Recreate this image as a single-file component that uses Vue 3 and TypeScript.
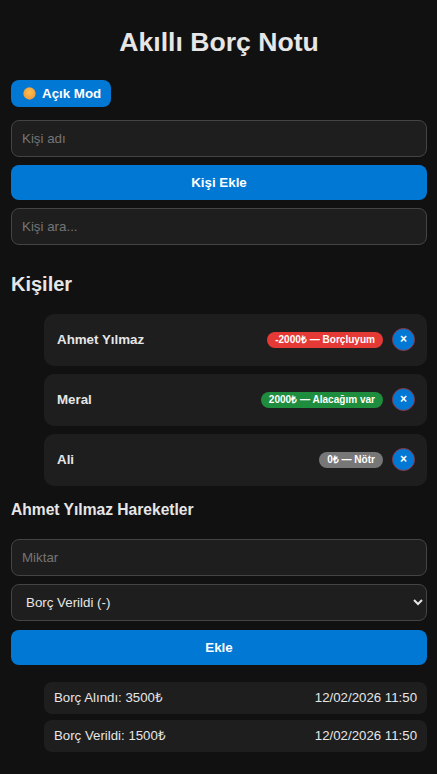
<script setup lang="ts">
import { ref } from "vue";

interface Person { name: string; label: string; tone: string }
interface Move { text: string; date: string }

const name = ref("");
const search = ref("");
const amount = ref("");
const kind = ref("verildi");

const people: Person[] = [
  { name: "Ahmet Yılmaz", label: "-2000₺ — Borçluyum", tone: "red" },
  { name: "Meral", label: "2000₺ — Alacağım var", tone: "green" },
  { name: "Ali", label: "0₺ — Nötr", tone: "gray" },
];
const moves: Move[] = [
  { text: "Borç Alındı: 3500₺", date: "12/02/2026 11:50" },
  { text: "Borç Verildi: 1500₺", date: "12/02/2026 11:50" },
];
</script>

<template>
  <main class="page">
    <h1 class="title">Akıllı Borç Notu</h1>
    <button class="mode" type="button">
      <svg class="sun" viewBox="0 0 14 14" width="13" height="13" aria-hidden="true">
        <defs>
          <radialGradient id="sunFill" cx="50%" cy="40%" r="60%">
            <stop offset="0%" stop-color="#fbc04e" />
            <stop offset="100%" stop-color="#ee9a3c" />
          </radialGradient>
        </defs>
        <circle cx="7" cy="7" r="6.6" fill="url(#sunFill)" />
      </svg>
      <span>Açık Mod</span>
    </button>

    <input v-model="name" class="field" placeholder="Kişi adı" />
    <button class="primary" type="button">Kişi Ekle</button>
    <input v-model="search" class="field" placeholder="Kişi ara..." />

    <h2 class="section">Kişiler</h2>
    <ul class="people">
      <li v-for="p in people" :key="p.name" class="person">
        <strong class="person-name">{{ p.name }}</strong>
        <div class="person-end">
          <span class="badge" :class="p.tone">{{ p.label }}</span>
          <button class="remove" type="button" aria-label="Sil">×</button>
        </div>
      </li>
    </ul>

    <h3 class="sub">Ahmet Yılmaz Hareketler</h3>
    <input v-model="amount" class="field amount" placeholder="Miktar" />
    <select v-model="kind" class="field select">
      <option value="verildi">Borç Verildi (-)</option>
      <option value="alindi">Borç Alındı (+)</option>
    </select>
    <button class="primary" type="button">Ekle</button>

    <ul class="moves">
      <li v-for="m in moves" :key="m.text" class="move">
        <span>{{ m.text }}</span>
        <span>{{ m.date }}</span>
      </li>
    </ul>
  </main>
</template>

<style>
html, body { margin: 0; background: #111; }
</style>

<style scoped>
.page {
  box-sizing: border-box;
  min-height: 774px;
  padding: 24px 10px 0 11px;
  background: #111;
  color: #e6e6e6;
  font-family: "Liberation Sans", Arial, sans-serif;
  display: flex;
  flex-direction: column;
  align-items: stretch;
}
.title {
  margin: 0 0 19px;
  font-size: 26.6px;
  line-height: 37px;
  font-weight: 700;
  text-align: center;
  color: #e6e6e6;
}
.mode {
  align-self: flex-start;
  display: flex;
  align-items: center;
  gap: 6px;
  width: 100px;
  height: 27px;
  padding: 0 0 0 12px;
  border: 0;
  border-radius: 8px;
  background: #0078d4;
  color: #fff;
  font: 700 13.333px "Liberation Sans", Arial, sans-serif;
  margin-bottom: 13px;
}
.sun { flex: none; }
.field {
  box-sizing: border-box;
  display: block;
  width: 100%;
  height: 37px;
  padding: 0 10px;
  border: 1px solid #444;
  border-radius: 8px;
  background: #1e1e1e;
  color: #e6e6e6;
  font: 400 13.333px "Liberation Sans", Arial, sans-serif;
  outline: none;
}
.field::placeholder { color: #757575; }
.primary {
  display: block;
  width: 100%;
  height: 35px;
  margin: 8px 0;
  border: 0;
  border-radius: 8px;
  background: #0078d4;
  color: #fff;
  font: 700 13.333px "Liberation Sans", Arial, sans-serif;
}
.section {
  margin: 27px 0 18px;
  font-size: 20px;
  line-height: 24px;
  font-weight: 700;
}
.people, .moves {
  list-style: none;
  margin: 0;
  padding: 0 0 0 33px;
  display: flex;
  flex-direction: column;
}
.people { gap: 8px; }
.person {
  height: 52px;
  padding: 0 12px 0 13px;
  border-radius: 10px;
  background: #1e1e1e;
  display: flex;
  align-items: center;
  justify-content: space-between;
}
.person-name { font-size: 13.333px; font-weight: 700; margin-bottom: 2px; }
.person-end { display: flex; align-items: center; gap: 9px; }
.badge {
  height: 16px;
  padding: 0 8px;
  border-radius: 8px;
  color: #fff;
  font-size: 10.05px;
  line-height: 16px;
  font-weight: 700;
}
.red { background: #e53935; }
.green { background: #1e8e3e; }
.gray { background: #777; }
.remove {
  box-sizing: border-box;
  width: 23px;
  height: 23px;
  margin-bottom: 1px;
  padding: 0 0 1px;
  border: 1px solid #8a3a4a;
  border-radius: 50%;
  background: #0078d4;
  color: #fff;
  font: 700 12px "Liberation Sans", Arial, sans-serif;
}
.sub {
  margin: 15px 0 20px;
  font-size: 15.6px;
  line-height: 18px;
  font-weight: 700;
}
.select { margin-top: 8px; }
.select option { background: #1e1e1e; }
.select + .primary { margin-top: 9px; }
.moves { margin-top: 9px; gap: 6px; }
.move {
  box-sizing: border-box;
  height: 32px;
  padding: 0 10px 2px;
  border-radius: 8px;
  background: #1e1e1e;
  display: flex;
  align-items: center;
  justify-content: space-between;
  font: 400 13.25px "Liberation Sans", Arial, sans-serif;
  color: #e6e6e6;
}
</style>
